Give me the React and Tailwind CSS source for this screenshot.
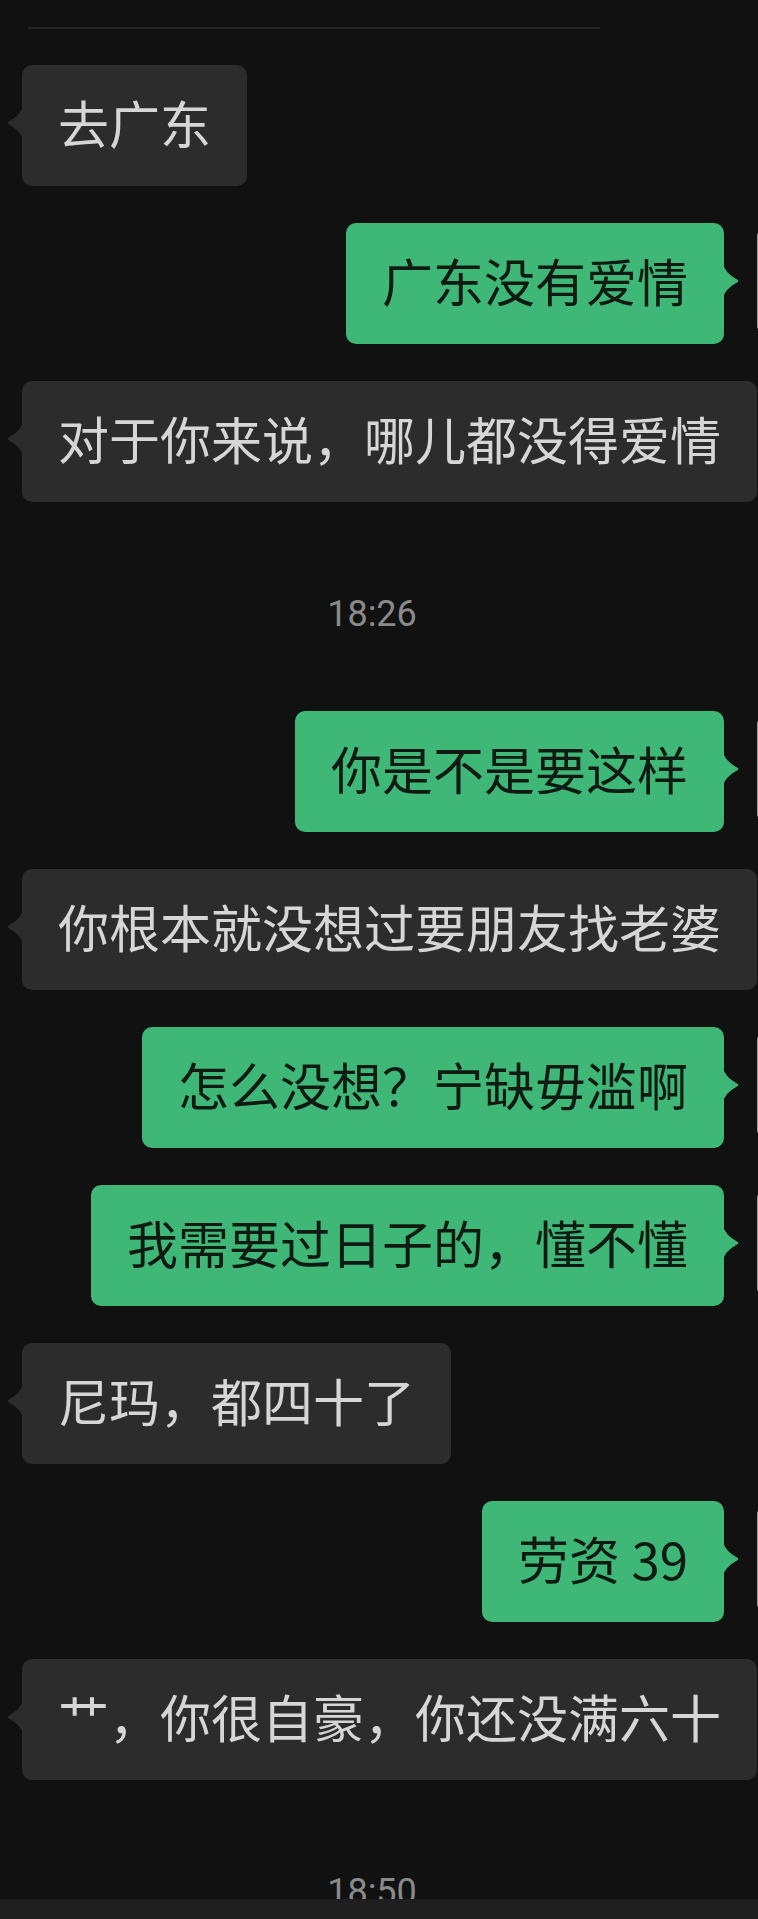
import React from "react";

const messages = [
  { t: "去广东", me: false },
  { t: "广东没有爱情", me: true },
  { t: "对于你来说，哪儿都没得爱情", me: false },
  { time: "18:26" },
  { t: "你是不是要这样", me: true },
  { t: "你根本就没想过要朋友找老婆", me: false },
  { t: "怎么没想？宁缺毋滥啊", me: true },
  { t: "我需要过日子的，懂不懂", me: true },
  { t: "尼玛，都四十了", me: false },
  { t: "劳资 39", me: true },
  { t: "艹，你很自豪，你还没满六十", me: false },
  { time: "18:50" },
];

function LeftTail() {
  return (
    <svg
      className="absolute left-[-15px] top-[41px] fill-[#2c2c2c]"
      width="16"
      height="34"
      viewBox="0 0 16 34"
    >
      <path d="M16 0 Q14 9 1.2 16 Q0 17 1.2 18 Q14 25 16 34 Z" />
    </svg>
  );
}

function RightTail() {
  return (
    <svg
      className="absolute right-[-15px] top-[41px] fill-[#3fb777]"
      width="16"
      height="34"
      viewBox="0 0 16 34"
    >
      <path d="M0 0 Q2 9 14.8 16 Q16 17 14.8 18 Q2 25 0 34 Z" />
    </svg>
  );
}

function Bubble({ text, me, first, afterTime }) {
  const mt = first ? "mt-[36px]" : afterTime ? "mt-[75px]" : "mt-[37px]";
  if (me) {
    return (
      <div className={`${mt} -mr-[99px] flex items-start justify-end`}>
        <div className="relative flex h-[121px] items-center whitespace-nowrap rounded-[10px] bg-[#3fb777] px-[36px] pb-[6px] text-[51px] leading-none text-[#0e1a12]">
          {text}
          <RightTail />
        </div>
        <div className="ml-[33px] mt-[7px] h-[102px] w-[100px] shrink-0 rounded-[6px] border-l border-[#9a9a9a] bg-[#e4e4e4]" />
      </div>
    );
  }
  return (
    <div className={`${mt} flex items-start justify-start pl-[22px]`}>
      <div className="relative flex h-[121px] items-center whitespace-nowrap rounded-[10px] bg-[#2c2c2c] px-[36px] pb-[6px] text-[51px] leading-none text-[#d6d6d6]">
        {text}
        <LeftTail />
      </div>
    </div>
  );
}

export default function App() {
  let prevTime = false;
  let first = true;
  return (
    <div
      className="relative h-[1919px] w-[758px] overflow-hidden bg-[#111111]"
      style={{ fontFamily: '"Noto Sans CJK SC", "Noto Sans", sans-serif' }}
    >
      <div className="flex flex-col pt-[27px]">
        <div className="ml-[28px] h-[2px] w-[572px] rounded-full bg-[#272727]" />
        {messages.map((m, i) => {
          if (m.time) {
            prevTime = true;
            return (
              <div
                key={i}
                className="mt-[90px] pr-[14px] text-center text-[36px] leading-[44px] text-[#8a8a8a]"
                style={{ fontFamily: 'Roboto, "Noto Sans", sans-serif' }}
              >
                {m.time}
              </div>
            );
          }
          const el = (
            <Bubble
              key={i}
              text={m.t}
              me={m.me}
              first={first}
              afterTime={prevTime}
            />
          );
          first = false;
          prevTime = false;
          return el;
        })}
      </div>
      <div className="absolute bottom-0 left-0 right-0 h-[20px] bg-[#1e1e1e]" />
    </div>
  );
}
